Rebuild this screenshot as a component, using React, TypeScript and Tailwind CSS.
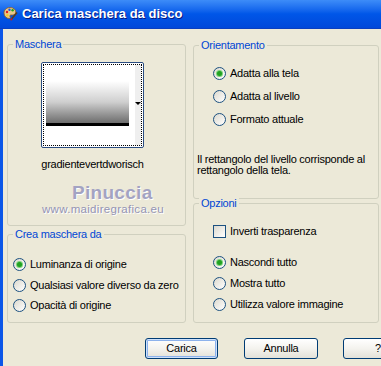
import React from "react";

type radioProps = {
  checked?: boolean;
  label: string;
};

const Radio = ({ checked, label }: radioProps) => (
  <div className="flex items-center gap-[4px]">
    <span className="w-[13px] h-[13px] rounded-full border border-[#1C5180] bg-linear-to-br from-[#DCD9CE] to-white flex items-center justify-center shrink-0">
      {checked && (
        <span className="w-[5px] h-[5px] rounded-full bg-[#21A121] shadow-[0_0_0_1px_#7BD27B]" />
      )}
    </span>
    <span className="whitespace-nowrap">{label}</span>
  </div>
);

const Group = ({
  title,
  className,
  children,
}: {
  title: string;
  className: string;
  children?: React.ReactNode;
}) => (
  <div
    className={`border border-[#D0D0BF] rounded-[3px] flex flex-col ${className}`}
  >
    <span className="block w-fit -mt-[7px] ml-[5px] px-[2px] bg-[#ECE9D8] text-[#0046D5] leading-[13px]">
      {title}
    </span>
    {children}
  </div>
);

const Button = ({
  label,
  def,
  w,
}: {
  label: string;
  def?: boolean;
  w: string;
}) => (
  <div
    className={`${w} h-[21px] shrink-0 rounded-[3px] border border-[#003C74] bg-linear-to-b from-white via-[#F4F3EE] to-[#E3E1D8] flex items-center justify-center ${
      def ? "shadow-[inset_0_0_0_1px_#CEE1FB,inset_0_0_0_2px_#8DB2EC]" : ""
    }`}
  >
    {label}
  </div>
);

const PaletteIcon = () => (
  <svg width="15" height="15" viewBox="0 0 15 15">
    <path
      d="M7 1.5C3.5 1.5 1 4 1 7c0 3 2.4 5.5 5.2 5.5 1.3 0 1.3-1.1.8-1.9-.5-.8 0-1.6 1-1.6h1.6c1.8 0 3.2-1.2 3.2-3C12.8 3.6 10.3 1.5 7 1.5z"
      fill="#E9C98A"
      stroke="#8A5A24"
      strokeWidth="0.8"
    />
    <circle cx="4" cy="6" r="1.2" fill="#E02020" />
    <circle cx="6.5" cy="3.8" r="1.2" fill="#1E50E0" />
    <circle cx="9.6" cy="4.3" r="1.2" fill="#20A020" />
    <circle cx="4.4" cy="9.2" r="1.2" fill="#F0D020" />
    <path d="M14 6.5 8.5 13" stroke="#5A3A1A" strokeWidth="1.6" />
    <path d="M9 12.5 7.6 14.3" stroke="#C02020" strokeWidth="1.8" />
  </svg>
);

const App = () => {
  return (
    <div className="w-[381px] h-[366px] overflow-hidden flex flex-col font-['Liberation_Sans',Arial,sans-serif] text-[11px] tracking-[-0.25px] text-black">
      <div className="h-[29px] shrink-0 flex items-center pl-[3px] pb-[1px] bg-linear-to-b from-[#3D8CF8] via-[#0056E8] to-[#0048DA] border-b border-[#0A3FC0]">
        <PaletteIcon />
        <span className="ml-[4px] text-white font-bold text-[13px] tracking-normal [text-shadow:1px_1px_#0A1A80]">
          Carica maschera da disco
        </span>
      </div>
      <div className="flex-1 bg-[#ECE9D8] border-l-[3px] border-[#0B56E8] flex flex-col">
        <div className="flex pl-[4px] pt-[15px] gap-[7px]">
          <div className="w-[179px] shrink-0 flex flex-col">
            <Group title="Maschera" className="h-[182px]">
              <div className="ml-[33px] mt-[11px] w-[103px] flex flex-col items-center">
                <div className="w-[103px] h-[86px] border border-[#2A4C80] rounded-[2px] p-[1px] bg-white">
                  <div className="h-full border border-dotted border-black flex">
                    <div className="ml-[2px] mt-[16px] w-[83px] h-[45px] bg-linear-to-b from-white via-[#CFCFCF] to-[#6E6E6E] border-b-[3px] border-black" />
                    <div className="ml-auto w-[6px] bg-[#EFEFEF] flex items-center justify-center pb-[4px]">
                      <span className="w-0 h-0 border-l-[3px] border-r-[3px] border-t-[3px] border-l-transparent border-r-transparent border-t-black" />
                    </div>
                  </div>
                </div>
                <span className="mt-[10px] leading-[13px] whitespace-nowrap">
                  gradientevertdworisch
                </span>
              </div>
              <span className="ml-[64px] mt-[13px] leading-[18px] text-[19px] font-semibold tracking-[0.3px] text-[#A3A3C2] [text-shadow:1px_1px_#FFFFFF]">
                Pinuccia
              </span>
              <span className="ml-[34px] mt-[1px] leading-[13px] text-[11.5px] tracking-[0.3px] text-[#9494B4] [text-shadow:1px_1px_#FFFFFF]">
                www.maidiregrafica.eu
              </span>
            </Group>
            <Group title="Crea maschera da" className="mt-[8px] h-[89px]">
              <div className="pl-[5px] mt-[13px] flex flex-col">
                <div className="h-[21px] flex items-center">
                  <Radio checked label="Luminanza di origine" />
                </div>
                <div className="h-[20px] flex items-center">
                  <Radio label="Qualsiasi valore diverso da zero" />
                </div>
                <div className="h-[20px] flex items-center">
                  <Radio label="Opacità di origine" />
                </div>
              </div>
            </Group>
          </div>
          <div className="w-[186px] shrink-0 flex flex-col">
            <Group title="Orientamento" className="mt-[1px] h-[154px]">
              <div className="pl-[19px] mt-[10px] flex flex-col">
                <div className="h-[23px] flex items-center">
                  <Radio checked label="Adatta alla tela" />
                </div>
                <div className="h-[23px] flex items-center">
                  <Radio label="Adatta al livello" />
                </div>
                <div className="h-[22px] flex items-center">
                  <Radio label="Formato attuale" />
                </div>
              </div>
              <p className="pl-[3px] mt-[24px] leading-[11px]">
                Il rettangolo del livello corrisponde al
                <br />
                rettangolo della tela.
              </p>
            </Group>
            <Group title="Opzioni" className="mt-[4px] h-[120px]">
              <div className="pl-[19px] mt-[11px] flex flex-col">
                <div className="h-[20px] flex items-center gap-[4px]">
                  <span className="w-[13px] h-[13px] border border-[#1C5180] bg-linear-to-br from-[#DCD9CE] to-white shrink-0" />
                  <span>Inverti trasparenza</span>
                </div>
                <div className="mt-[11px] h-[21px] flex items-center">
                  <Radio checked label="Nascondi tutto" />
                </div>
                <div className="h-[21px] flex items-center">
                  <Radio label="Mostra tutto" />
                </div>
                <div className="h-[21px] flex items-center">
                  <Radio label="Utilizza valore immagine" />
                </div>
              </div>
            </Group>
          </div>
        </div>
        <div className="flex pl-[142px] mt-[15px]">
          <Button label="Carica" def w="w-[73px]" />
          <div className="ml-[26px]">
            <Button label="Annulla" w="w-[74px]" />
          </div>
          <div className="ml-[25px]">
            <Button label="?" w="w-[70px]" />
          </div>
        </div>
      </div>
    </div>
  );
};

export default App;
